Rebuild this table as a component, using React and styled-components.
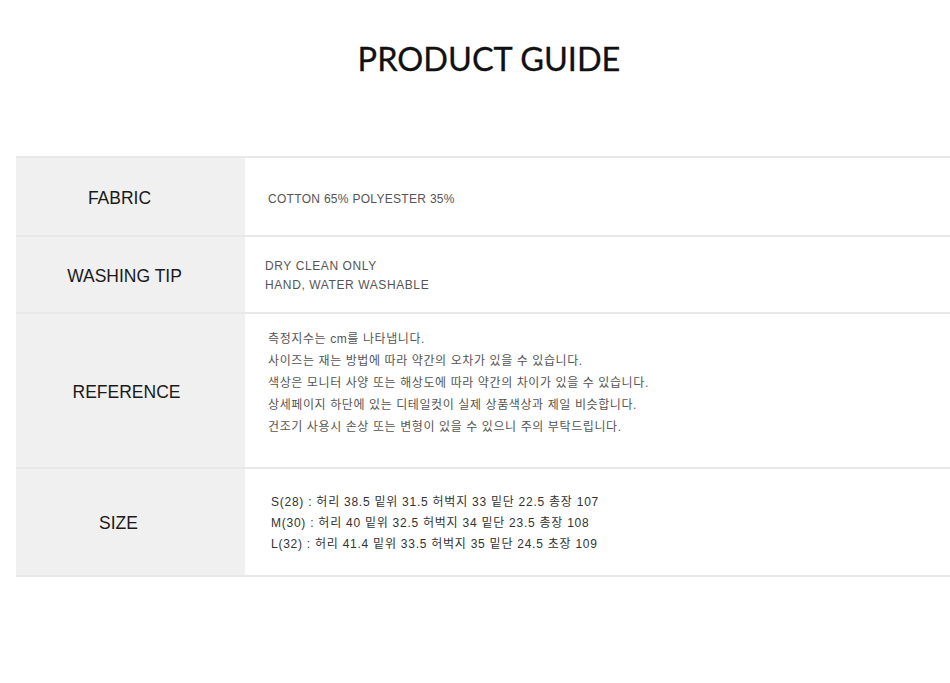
import React from 'react';
import styled, { createGlobalStyle } from 'styled-components';

const GlobalStyle = createGlobalStyle`
  html, body {
    margin: 0;
    padding: 0;
    background: #fff;
    overflow: hidden;
  }
  body {
    font-family: "Liberation Sans", "Noto Sans CJK KR", sans-serif;
  }
`;

const Page = styled.div`
  width: 950px;
  height: 683px;
  overflow: hidden;
`;

const Title = styled.h1`
  margin: 0;
  padding: 39px 0 0 28px;
  height: 157px;
  box-sizing: border-box;
  text-align: center;
  font-family: "Lato", sans-serif;
  font-weight: 400;
  font-size: 32.5px;
  line-height: 40px;
  color: #111;
  -webkit-text-stroke: 0.3px #111;
`;

const Table = styled.div`
  margin-left: 16px;
  width: 960px;
  border-top: 2px solid #e8e8e8;
  margin-top: -1px;
`;

const Row = styled.div`
  display: grid;
  grid-template-columns: 229px 1fr;
  height: ${p => p.$h}px;
  border-bottom: 2px solid #e8e8e8;
  box-sizing: border-box;
`;

const Label = styled.div`
  background: #f0f0f0;
  display: flex;
  align-items: center;
  justify-content: center;
  padding-top: 3px;
  padding-right: ${p => p.$shift || 14}px;
  font-size: 17.5px;
  color: #1a1a1a;
`;

const Content = styled.div`
  display: flex;
  flex-direction: column;
  justify-content: center;
  padding-top: ${p => p.$pt || 0}px;
  padding-left: ${p => p.$pl}px;
  padding-bottom: ${p => p.$pb || 0}px;
  font-size: 12px;
  line-height: ${p => p.$lh}px;
  letter-spacing: ${p => p.$ls}px;
  color: ${p => p.$color || '#555'};
`;

const rows = [
  {
    label: 'FABRIC',
    h: 79,
    shift: 22,
    pl: 23,
    pt: 5,
    lh: 19,
    ls: 0.3,
    lines: ['COTTON 65% POLYESTER 35%'],
  },
  {
    label: 'WASHING TIP',
    h: 77,
    shift: 12,
    pl: 20,
    pt: 3,
    lh: 19,
    ls: 0.6,
    lines: ['DRY CLEAN ONLY', 'HAND, WATER WASHABLE'],
  },
  {
    label: 'REFERENCE',
    h: 155,
    shift: 8,
    pl: 23,
    pt: 2,
    lh: 22,
    ls: 0.6,
    pb: 17,
    lines: [
      '측정지수는 cm를 나타냅니다.',
      '사이즈는 재는 방법에 따라 약간의 오차가 있을 수 있습니다.',
      '색상은 모니터 사양 또는 해상도에 따라 약간의 차이가 있을 수 있습니다.',
      '상세페이지 하단에 있는 디테일컷이 실제 상품색상과 제일 비슷합니다.',
      '건조기 사용시 손상 또는 변형이 있을 수 있으니 주의 부탁드립니다.',
    ],
  },
  {
    label: 'SIZE',
    h: 108,
    shift: 24,
    pl: 26,
    pt: 3,
    lh: 21,
    ls: 0.75,
    color: '#333',
    lines: [
      'S(28) : 허리 38.5 밑위 31.5 허벅지 33 밑단 22.5 총장 107',
      'M(30) : 허리 40 밑위 32.5 허벅지 34 밑단 23.5 총장 108',
      'L(32) : 허리 41.4 밑위 33.5 허벅지 35 밑단 24.5 초장 109',
    ],
  },
];

export default function App() {
  return (
    <Page>
      <GlobalStyle />
      <Title>PRODUCT GUIDE</Title>
      <Table>
        {rows.map(r => (
          <Row key={r.label} $h={r.h}>
            <Label $shift={r.shift}>{r.label}</Label>
            <Content $pl={r.pl} $pt={r.pt} $lh={r.lh} $ls={r.ls} $pb={r.pb} $color={r.color}>
              {r.lines.map(l => (
                <div key={l}>{l}</div>
              ))}
            </Content>
          </Row>
        ))}
      </Table>
    </Page>
  );
}
